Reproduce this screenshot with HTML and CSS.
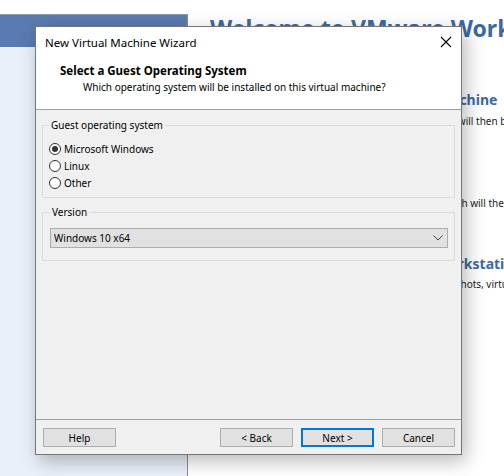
FILE: index.html
```html
<!DOCTYPE html>
<html>
<head>
<meta charset="utf-8">
<link rel="stylesheet" href="styles.css">
</head>
<body>
<div class="backdrop">
  <div class="side">
    <div class="side-head"></div>
    <div class="side-body"></div>
  </div>
  <div class="home">
    <h1 class="welcome">Welcome to VMware Workstation 15 Player</h1>
    <div class="section s-create">
      <h2 class="h2">Create a New Virtual Machine</h2>
      <p class="p">Create a new virtual machine, which will then be added to the top of your library.</p>
    </div>
    <div class="section s-open">
      <h2 class="h2">Open a Virtual Machine</h2>
      <p class="p">Open an existing virtual machine, which will then be added to the top of your library.</p>
    </div>
    <div class="section s-upgrade">
      <h2 class="h2">Upgrade to VMware Workstation Pro</h2>
      <p class="p">Get advanced features such as snapshots, virtual network management, and more.</p>
    </div>
  </div>
</div>

<div class="dialog">
  <div class="header">
    <div class="titlebar">
      <span class="title">New Virtual Machine Wizard</span>
      <svg class="close" width="12" height="12" viewBox="0 0 12 12"><path d="M1 1 L11 11 M11 1 L1 11" stroke="#000" stroke-width="1.1" fill="none"/></svg>
    </div>
    <div class="step-title">Select a Guest Operating System</div>
    <div class="step-sub">Which operating system will be installed on this virtual machine?</div>
  </div>
  <div class="body">
    <fieldset class="group group-os">
      <legend>Guest operating system</legend>
      <label class="radio"><span class="dot checked"></span>Microsoft Windows</label>
      <label class="radio"><span class="dot"></span>Linux</label>
      <label class="radio"><span class="dot"></span>Other</label>
    </fieldset>
    <fieldset class="group group-ver">
      <legend>Version</legend>
      <div class="select">
        <span>Windows 10 x64</span>
        <svg width="10" height="6" viewBox="0 0 10 6"><path d="M0.5 0.5 L5 5 L9.5 0.5" stroke="#444" stroke-width="1" fill="none"/></svg>
      </div>
    </fieldset>
  </div>
  <div class="footer">
    <div class="btn">Help</div>
    <div class="spacer"></div>
    <div class="btn">&lt; Back</div>
    <div class="btn primary">Next &gt;</div>
    <div class="btn">Cancel</div>
  </div>
</div>
</body>
</html>
```

FILE: styles.css
```css
html, body {
  margin: 0;
  padding: 0;
  width: 504px;
  height: 476px;
  overflow: hidden;
  background: #ffffff;
  font-family: "Noto Sans", "Open Sans", sans-serif;
  font-size: 10px;
  color: #000;
}

.backdrop {
  display: flex;
  height: 476px;
}

.side {
  width: 187px;
  flex: none;
  margin-top: 14px;
  border-top: 1px solid #8f9aa8;
  border-right: 1px solid #8c8c8c;
  display: flex;
  flex-direction: column;
}

.side-head {
  height: 32px;
  background: #5a7bb2;
}

.side-body {
  flex: 1;
  background: #e9f0f9;
}

.home {
  flex: 1;
  padding-left: 22px;
  white-space: nowrap;
  overflow: hidden;
}

.welcome {
  margin: 14px 0 0 0;
  font-size: 23px;
  font-weight: bold;
  color: #3b6aa3;
  line-height: 28px;
}

.section {
  margin-left: 80px;
}

.h2 {
  margin: 0;
  font-size: 14px;
  font-weight: bold;
  color: #3b6aa3;
  line-height: 20px;
}

.p {
  margin: 3px 0 0 0;
  font-size: 10px;
  line-height: 16px;
  color: #222;
}

.s-create { margin-top: 48px; }
.s-create .p { margin-left: -4px; }
.s-open { margin-top: 43px; }
.s-open .p { margin-left: -10px; }
.s-upgrade { margin-top: 43px; }
.s-upgrade .h2 { padding-left: 3px; }
.s-upgrade .p { margin-top: 2px; margin-left: -3px; }

.dialog {
  position: absolute;
  left: 35px;
  top: 26px;
  width: 427px;
  height: 429px;
  box-sizing: border-box;
  border: 1px solid #767676;
  background: #f0f0f0;
  box-shadow: 4px 6px 18px rgba(0, 0, 0, 0.28);
  display: flex;
  flex-direction: column;
}

.header {
  height: 83px;
  box-sizing: border-box;
  background: #ffffff;
  border-bottom: 1px solid #a0a0a0;
  flex: none;
}

.titlebar {
  display: flex;
  align-items: center;
  justify-content: space-between;
  height: 30px;
  padding: 0 9px 0 9px;
}

.title {
  font-size: 11.5px;
}

.step-title {
  margin-top: 6px;
  padding-left: 24px;
  font-size: 11.5px;
  font-weight: bold;
  line-height: 16px;
}

.step-sub {
  padding-left: 47px;
  font-size: 10px;
  line-height: 16px;
}

.body {
  flex: 1;
  padding: 7px 6px 0 6px;
}

.group {
  margin: 0;
  border: 1px solid #dcdcdc;
  padding: 0 6px;
  min-width: 0;
}

.group legend {
  padding: 0 2px;
  line-height: 16px;
}

.group-os {
  height: 81px;
  box-sizing: border-box;
  padding-top: 8px;
}

.group-ver {
  margin-top: 6px;
  height: 57px;
  box-sizing: border-box;
  padding: 8px 6px 0 7px;
}

.radio {
  display: flex;
  align-items: center;
  height: 16.7px;
}

.dot {
  width: 10px;
  height: 10px;
  border: 1px solid #333;
  border-radius: 50%;
  margin-right: 3px;
  position: relative;
  box-sizing: content-box;
  background: #fff;
}

.dot.checked::after {
  content: "";
  position: absolute;
  left: 2px;
  top: 2px;
  width: 6px;
  height: 6px;
  border-radius: 50%;
  background: #333;
}

.select {
  height: 20px;
  box-sizing: border-box;
  border: 1px solid #adadad;
  background: #e1e1e1;
  display: flex;
  align-items: center;
  justify-content: space-between;
  padding: 0 4px 0 3px;
}

.footer {
  flex: none;
  height: 35px;
  box-sizing: border-box;
  border-top: 1px solid #a0a0a0;
  display: flex;
  align-items: flex-start;
  padding: 8px 6px 0 7px;
  gap: 8px;
}

.spacer {
  flex: 1;
}

.btn {
  width: 73px;
  height: 19px;
  box-sizing: border-box;
  border: 1px solid #adadad;
  background: #e1e1e1;
  display: flex;
  align-items: center;
  justify-content: center;
  line-height: 16px;
}

.btn.primary {
  border: 2px solid #0078d7;
}
```
